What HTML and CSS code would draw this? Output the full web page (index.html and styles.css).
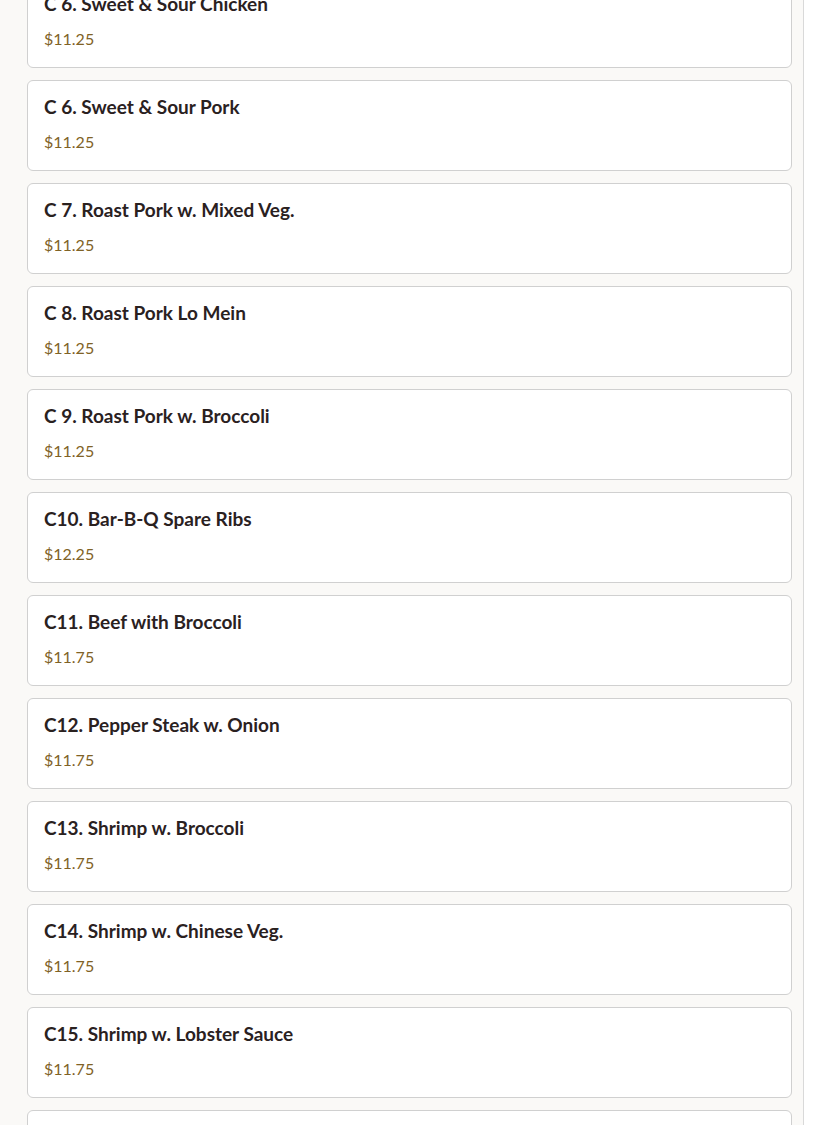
FILE: index.html
```html
<!DOCTYPE html>
<html lang="en">
<head>
<meta charset="utf-8">
<title>Menu</title>
<link rel="stylesheet" href="styles.css">
</head>
<body>
<div class="page">
  <ul class="menu-list">
    <li class="item"><h3 class="item-name">C 6. Sweet &amp; Sour Chicken</h3><p class="item-price">$11.25</p></li>
    <li class="item"><h3 class="item-name">C 6. Sweet &amp; Sour Pork</h3><p class="item-price">$11.25</p></li>
    <li class="item"><h3 class="item-name">C 7. Roast Pork w. Mixed Veg.</h3><p class="item-price">$11.25</p></li>
    <li class="item"><h3 class="item-name">C 8. Roast Pork Lo Mein</h3><p class="item-price">$11.25</p></li>
    <li class="item"><h3 class="item-name">C 9. Roast Pork w. Broccoli</h3><p class="item-price">$11.25</p></li>
    <li class="item"><h3 class="item-name">C10. Bar-B-Q Spare Ribs</h3><p class="item-price">$12.25</p></li>
    <li class="item"><h3 class="item-name">C11. Beef with Broccoli</h3><p class="item-price">$11.75</p></li>
    <li class="item"><h3 class="item-name">C12. Pepper Steak w. Onion</h3><p class="item-price">$11.75</p></li>
    <li class="item"><h3 class="item-name">C13. Shrimp w. Broccoli</h3><p class="item-price">$11.75</p></li>
    <li class="item"><h3 class="item-name">C14. Shrimp w. Chinese Veg.</h3><p class="item-price">$11.75</p></li>
    <li class="item"><h3 class="item-name">C15. Shrimp w. Lobster Sauce</h3><p class="item-price">$11.75</p></li>
    <li class="item"><h3 class="item-name">C16. Shrimp w. Garlic Sauce</h3><p class="item-price">$11.75</p></li>
  </ul>
</div>
</body>
</html>
```

FILE: styles.css
```css
html, body {
  margin: 0;
  padding: 0;
  background: #ffffff;
  height: 100%;
  overflow: hidden;
}

body {
  font-family: "Lato", "Noto Sans", sans-serif;
}

.page {
  width: 804px;
  min-height: 100vh;
  background: #faf9f7;
  border-right: 1px solid #d9d9d9;
  box-sizing: border-box;
}

.menu-list {
  list-style: none;
  margin: -23px 0 0 0;
  padding: 0 11px 0 27px;
  display: flex;
  flex-direction: column;
  gap: 12px;
}

.item {
  background: #ffffff;
  border: 1px solid #d0d0d0;
  border-radius: 6px;
  height: 91px;
  box-sizing: border-box;
  padding: 14px 16px 0 16px;
  display: flex;
  flex-direction: column;
  gap: 12px;
}

.item-name {
  margin: 0;
  font-size: 19px;
  line-height: 24px;
  font-weight: 700;
  color: #2a211f;
}

.item-price {
  margin: 0;
  font-size: 16px;
  line-height: 22px;
  font-weight: 400;
  color: #7f6226;
}
```
